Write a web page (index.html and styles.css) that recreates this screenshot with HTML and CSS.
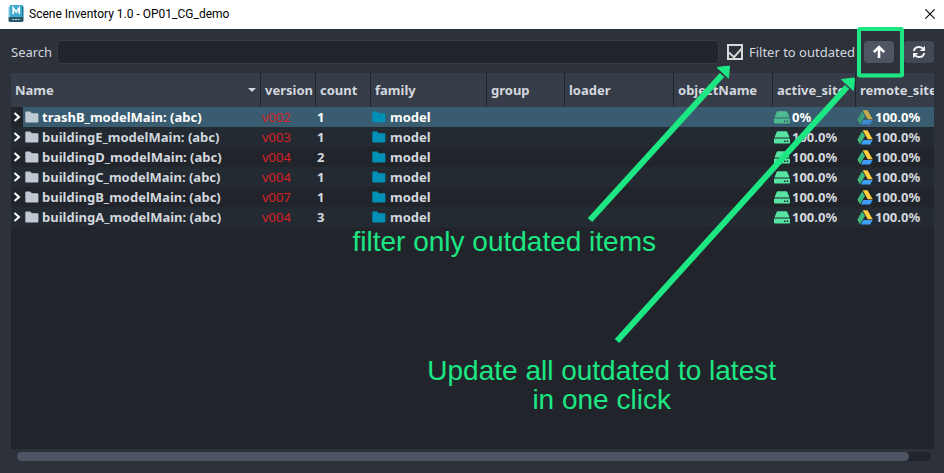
FILE: index.html
```html
<!DOCTYPE html>
<html lang="en">
<head>
<meta charset="utf-8">
<title>Scene Inventory 1.0 - OP01_CG_demo</title>
<link rel="stylesheet" href="styles.css">
</head>
<body>
<svg class="symbols" aria-hidden="true">
  <symbol id="folder" viewBox="0 0 14 12"><path d="M1 0.5h4.2l1.6 1.7H12.4q1 0 1 1V10.6q0 1-1 1H1.3q-1 0-1-1V1.5q0-1 .7-1z" fill="currentColor"/></symbol>
  <symbol id="chevron" viewBox="0 0 8 10"><path d="M1.5 1L6 5L1.5 9" fill="none" stroke="#fff" stroke-width="2"/></symbol>
  <symbol id="drive" viewBox="0 0 16 13"><path d="M3.6 0.3h8.8q.6 0 .9.6L15.6 6.6H.4L2.7.9q.3-.6.9-.6zM.9 7.5h14.2q.9 0 .9.9v3.200q0 .9-.9.900H.9q-.9 0-.9-.9V8.400q0-.9.900-.9zM10 9.400v1.500h1.500V9.400zM12.700 9.400v1.500h1.500V9.400z" fill="#57e3a1" fill-rule="evenodd"/></symbol>
  <symbol id="gdrive" viewBox="0 0 16 15"><path d="M5.200 1.200L8 6L3 14.300L0.300 9.700z" fill="#3cba7c"/><path d="M5.700 0.300H10.500L15.700 9.300H10.800z" fill="#ffcf3f"/><path d="M6.300 9.900H15.600L13.200 14.400H3.800z" fill="#3f9df5"/></symbol>
</svg>
<div class="window">
  <header class="titlebar">
    <svg class="app-icon" viewBox="0 0 16 17" aria-hidden="true"><path d="M2 0h12.500v12H2z" fill="#41abd0"/><path d="M0.500 2L2 1v11H0.500z" fill="#7cc7df"/><path d="M14 0.500l1.500 1V12H14z" fill="#1b7797"/><path d="M0.500 12h15v4l-1 1h-13l-1-1z" fill="#2a566c"/><path d="M5.200 9V3L8.200 7l3-4v6" fill="none" stroke="#fff" stroke-width="1.600"/><path d="M4.500 14.500h1.500M7 14.500h2M10 14.500h1.500" stroke="#dce9ee"/></svg>
    <h1 class="title">Scene Inventory 1.0 - OP01_CG_demo</h1>
    <button class="close" aria-label="Close"><svg viewBox="0 0 10 10"><path d="M0.300 0.300L9.700 9.700M9.700 0.300L0.300 9.700" stroke="#000" stroke-width="1.100"/></svg></button>
  </header>
  <main class="content">
    <div class="toolbar">
      <label class="search-label" for="search">Search</label>
      <input class="search" id="search" type="text">
      <label class="filter"><input class="checkbox" type="checkbox" checked>Filter to outdated</label>
      <div class="actions">
        <button class="tool active" aria-label="Update all to latest"><svg viewBox="0 0 14 14"><path d="M7 13V3M1.800 7.200L7 2l5.200 5.200" fill="none" stroke="#fff" stroke-width="2.600"/></svg></button>
        <button class="tool" aria-label="Refresh"><svg viewBox="0 0 14 14"><path d="M1.700 6Q2.800 1.900 7 1.900Q9.400 1.900 11 3.600M12.300 8Q11.200 12.100 7 12.100Q4.600 12.100 3 10.400" fill="none" stroke="#f2f3f5" stroke-width="2"/><path d="M13 0.800V6H7.800zM1 13.200V8h5.200z" fill="#f2f3f5"/></svg></button>
      </div>
    </div>
    <div class="view">
      <table class="inventory">
        <colgroup><col class="c-name"><col class="c-small"><col class="c-small"><col class="c-family"><col class="c-group"><col class="c-loader"><col class="c-object"><col class="c-active"><col></colgroup>
        <thead><tr><th class="sorted">Name</th><th>version</th><th>count</th><th>family</th><th>group</th><th>loader</th><th>objectName</th><th>active_site</th><th>remote_site</th></tr></thead>
        <tbody>
          <tr class="selected"><td><div class="name"><span class="branch"><svg class="chevron"><use href="#chevron"/></svg></span><span class="item"><svg class="folder"><use href="#folder"/></svg>trashB_modelMain: (abc)</span></div></td><td class="version">v002</td><td class="count">1</td><td><div class="family"><svg class="folder"><use href="#folder"/></svg>model</div></td><td></td><td></td><td></td><td><div class="site"><svg class="drive"><use href="#drive"/></svg>0%</div></td><td><div class="site"><svg class="gdrive"><use href="#gdrive"/></svg>100.0%</div></td></tr>
          <tr><td><div class="name"><span class="branch"><svg class="chevron"><use href="#chevron"/></svg></span><span class="item"><svg class="folder"><use href="#folder"/></svg>buildingE_modelMain: (abc)</span></div></td><td class="version">v003</td><td class="count">1</td><td><div class="family"><svg class="folder"><use href="#folder"/></svg>model</div></td><td></td><td></td><td></td><td><div class="site"><svg class="drive"><use href="#drive"/></svg>100.0%</div></td><td><div class="site"><svg class="gdrive"><use href="#gdrive"/></svg>100.0%</div></td></tr>
          <tr><td><div class="name"><span class="branch"><svg class="chevron"><use href="#chevron"/></svg></span><span class="item"><svg class="folder"><use href="#folder"/></svg>buildingD_modelMain: (abc)</span></div></td><td class="version">v004</td><td class="count">2</td><td><div class="family"><svg class="folder"><use href="#folder"/></svg>model</div></td><td></td><td></td><td></td><td><div class="site"><svg class="drive"><use href="#drive"/></svg>100.0%</div></td><td><div class="site"><svg class="gdrive"><use href="#gdrive"/></svg>100.0%</div></td></tr>
          <tr><td><div class="name"><span class="branch"><svg class="chevron"><use href="#chevron"/></svg></span><span class="item"><svg class="folder"><use href="#folder"/></svg>buildingC_modelMain: (abc)</span></div></td><td class="version">v004</td><td class="count">1</td><td><div class="family"><svg class="folder"><use href="#folder"/></svg>model</div></td><td></td><td></td><td></td><td><div class="site"><svg class="drive"><use href="#drive"/></svg>100.0%</div></td><td><div class="site"><svg class="gdrive"><use href="#gdrive"/></svg>100.0%</div></td></tr>
          <tr><td><div class="name"><span class="branch"><svg class="chevron"><use href="#chevron"/></svg></span><span class="item"><svg class="folder"><use href="#folder"/></svg>buildingB_modelMain: (abc)</span></div></td><td class="version">v007</td><td class="count">1</td><td><div class="family"><svg class="folder"><use href="#folder"/></svg>model</div></td><td></td><td></td><td></td><td><div class="site"><svg class="drive"><use href="#drive"/></svg>100.0%</div></td><td><div class="site"><svg class="gdrive"><use href="#gdrive"/></svg>100.0%</div></td></tr>
          <tr><td><div class="name"><span class="branch"><svg class="chevron"><use href="#chevron"/></svg></span><span class="item"><svg class="folder"><use href="#folder"/></svg>buildingA_modelMain: (abc)</span></div></td><td class="version">v004</td><td class="count">3</td><td><div class="family"><svg class="folder"><use href="#folder"/></svg>model</div></td><td></td><td></td><td></td><td><div class="site"><svg class="drive"><use href="#drive"/></svg>100.0%</div></td><td><div class="site"><svg class="gdrive"><use href="#gdrive"/></svg>100.0%</div></td></tr>
        </tbody>
      </table>
    </div>
    <div class="scrollbar"><div class="thumb"></div></div>
  </main>
  <svg class="arrows" viewBox="0 0 400 360" aria-hidden="true">
    <g fill="none" stroke="#1ce783"><path d="M46 220L178 75M73 341L303 87" stroke-width="6"/><rect x="315" y="29" width="43" height="46.500" rx="1" stroke-width="4"/></g>
    <path d="M185.500 66L184.500 78L173 67.500zM310.500 78L309.500 90.500L297.500 79.500z" fill="#1ce783" stroke="#1ce783"/>
  </svg>
  <p class="callout callout-filter">filter only outdated items</p>
  <p class="callout callout-update">Update all outdated to latest<br>in one click</p>
</div>
</body>
</html>
```
FILE: styles.css
```css
* { box-sizing: border-box; }
body { margin: 0; background: #2d313a; font: 13px "Noto Sans", "Open Sans", sans-serif; color: #d3d8de; }
svg { display: block; flex: none; }
button { border: 0; padding: 0; display: grid; place-items: center; }
.symbols { position: absolute; width: 0; height: 0; }
.window { position: relative; min-height: 100vh; display: flex; flex-direction: column; overflow: hidden; }

.titlebar { display: flex; align-items: center; gap: 5px; height: 29px; padding: 0 9px 2px 8px; background: #fff; color: #000; }
.app-icon { width: 16px; height: 17px; }
.title { flex: 1; margin: 0; font: 12px Roboto, sans-serif; }
.close { width: 10px; height: 10px; background: none; }
.close svg { width: 10px; height: 10px; }

.content { flex: 1; display: flex; flex-direction: column; padding: 11px 10px 12px 11px; }
.toolbar { display: flex; align-items: center; height: 24px; margin-bottom: 9px; }
.search-label { margin-right: 5px; }
.search { flex: 1; min-width: 0; height: 24px; border: 1px solid #373d48; border-radius: 4px; background: #21252b; color: inherit; font: inherit; }
.filter { display: flex; align-items: center; gap: 6px; margin-left: 8px; }
.checkbox { appearance: none; width: 16px; height: 16px; margin: 0; border: 2px solid #d7d9d9; display: grid; place-items: center; }
.checkbox:checked::before { content: ""; width: 11px; height: 6px; border: solid #d7d9d9; border-width: 0 0 2px 2px; transform: translateY(-1px) rotate(-48deg); }
.actions { display: flex; gap: 10px; margin-left: 9px; }
.tool { width: 30px; height: 22px; border-radius: 4px; background: #434a56; }
.tool.active { background: #4f5563; }
.tool svg { width: 14px; height: 14px; }

.view { flex: 1; background: #21252b; overflow: hidden; }
.inventory { width: 100%; table-layout: fixed; border-collapse: separate; border-spacing: 0; font-weight: 700; }
.c-name { width: 250px; }
.c-small { width: 55px; }
.c-family { width: 116px; }
.c-group { width: 78px; }
.c-loader { width: 109px; }
.c-object { width: 99px; }
.c-active { width: 83px; }
th { height: 34px; padding: 0 4px; border-right: 1px solid #21252b; background: #373d48; text-align: left; white-space: nowrap; overflow: hidden; }
th:last-child { border-right: 0; padding-right: 0; }
.sorted::after { content: ""; float: right; margin-top: 7px; border: solid transparent; border-width: 4px 4px 0; border-top-color: #d3d8de; }
td { height: 20px; padding: 0; line-height: 20px; white-space: nowrap; overflow: hidden; }
tbody tr:nth-child(even) { background: #232a31; }
tbody .selected { background: #395c71; color: #fff; }
.name, .item, .family, .site { display: flex; align-items: center; }
.branch { display: grid; place-items: center; width: 12px; height: 20px; }
.selected .branch { background: #21252b; }
.chevron { width: 8px; height: 10px; }
.folder { width: 14px; height: 12px; color: #bfcad3; }
.item { gap: 3px; padding-left: 2px; }
.version { padding-left: 1px; color: #d82026; font-weight: 400; }
.count { padding-left: 1px; }
.family { gap: 4px; padding-left: 1px; }
.family .folder { color: #0090b5; }
.site { gap: 2px; padding-left: 1px; }
.drive { width: 16px; height: 13px; }
.gdrive { width: 16px; height: 15px; }
.selected .drive, .selected .gdrive { opacity: .7; }

.scrollbar { height: 9px; margin: 3px 3px 0 6px; border-radius: 5px; background: #21252b; }
.thumb { width: 97.600%; height: 9px; border-radius: 5px; background: #4d5462; }

.arrows { position: absolute; top: 0; right: 0; width: 400px; height: 360px; pointer-events: none; }
.callout { position: absolute; margin: 0; color: #1ce783; font: 28px/29px "Liberation Sans", Arial, sans-serif; text-align: center; white-space: nowrap; }
.callout-filter { top: 227px; right: 288px; }
.callout-update { top: 356px; right: 168px; }
```
